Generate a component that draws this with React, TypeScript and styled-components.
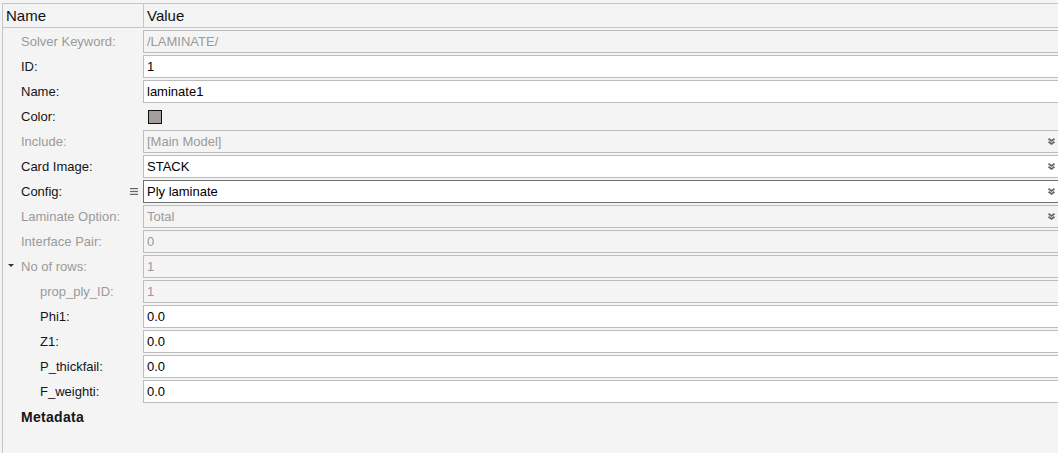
import React from "react";
import styled, { createGlobalStyle } from "styled-components";

const Global = createGlobalStyle`
  html, body { margin: 0; padding: 0; background: #f4f4f4; overflow: hidden; }
  body { font-family: "Liberation Sans", Arial, sans-serif; }
`;

const Panel = styled.div`
  margin: 3px 0 0 2px;
  width: 1060px;
  height: 450px;
  border-top: 1px solid #c6c6c6;
  border-left: 1px solid #c6c6c6;
  box-sizing: border-box;
  background: #f4f4f4;
`;

const Header = styled.div`
  display: grid;
  grid-template-columns: 141px 1fr;
  height: 24px;
  border-bottom: 1px solid #c6c6c6;
  box-sizing: border-box;
`;

const HeadCell = styled.div<{ $divider?: boolean }>`
  display: flex;
  align-items: center;
  padding-left: 3px;
  font-size: 15px;
  color: #111;
  border-right: ${(p) => (p.$divider ? "1px solid #c6c6c6" : "none")};
`;

const Body = styled.div`
  display: flex;
  flex-direction: column;
  gap: 2px;
  padding-top: 2px;
`;

const Row = styled.div`
  display: grid;
  grid-template-columns: 140px 1fr;
  height: 23px;
  align-items: center;
`;

const LabelCell = styled.div<{ $indent: number; $disabled?: boolean; $bold?: boolean }>`
  position: relative;
  display: flex;
  align-items: center;
  height: 100%;
  padding-left: ${(p) => 18 + p.$indent * 19}px;
  font-size: ${(p) => (p.$bold ? "14px" : "13px")};
  letter-spacing: ${(p) => (p.$bold ? "0.3px" : "0")};
  font-weight: ${(p) => (p.$bold ? 700 : 400)};
  color: ${(p) => (p.$disabled ? "#9a9a9a" : "#151515")};
  white-space: nowrap;
`;

const Toggle = styled.span`
  position: absolute;
  left: 5px;
  top: 9px;
  width: 0;
  height: 0;
  border-left: 3px solid transparent;
  border-right: 3px solid transparent;
  border-top: 3px solid #333;
`;

const MenuIcon = styled.svg`
  position: absolute;
  right: 5px;
  top: 8px;
`;

const Field = styled.div<{ $disabled?: boolean; $focused?: boolean }>`
  position: relative;
  height: 23px;
  box-sizing: border-box;
  border: 1px solid ${(p) => (p.$focused ? "#707070" : "#bcbcbc")};
  background: ${(p) => (p.$disabled ? "#f4f4f4" : "#ffffff")};
  color: ${(p) => (p.$disabled ? "#9a9a9a" : "#000")};
  font-size: 13px;
  display: flex;
  align-items: center;
  padding-left: 3px;
`;

const Chevron = styled.svg`
  position: absolute;
  right: 6px;
  top: 7px;
`;

const Swatch = styled.div`
  width: 12px;
  height: 12px;
  margin-left: 5px;
  border: 1px solid #111;
  background: #a39e9c;
`;

type RowDef = {
  label: string;
  value?: string;
  indent?: number;
  disabled?: boolean;
  labelDisabled?: boolean;
  select?: boolean;
  focused?: boolean;
  swatch?: boolean;
  toggle?: boolean;
  menu?: boolean;
  bold?: boolean;
  noField?: boolean;
};

const rows: RowDef[] = [
  { label: "Solver Keyword:", value: "/LAMINATE/", disabled: true, labelDisabled: true },
  { label: "ID:", value: "1" },
  { label: "Name:", value: "laminate1" },
  { label: "Color:", swatch: true },
  { label: "Include:", value: "[Main Model]", disabled: true, labelDisabled: true, select: true },
  { label: "Card Image:", value: "STACK", select: true },
  { label: "Config:", value: "Ply laminate", select: true, focused: true, menu: true },
  { label: "Laminate Option:", value: "Total", disabled: true, labelDisabled: true, select: true },
  { label: "Interface Pair:", value: "0", disabled: true, labelDisabled: true },
  { label: "No of rows:", value: "1", disabled: true, labelDisabled: true, toggle: true },
  { label: "prop_ply_ID:", value: "1", disabled: true, labelDisabled: true, indent: 1 },
  { label: "Phi1:", value: "0.0", indent: 1 },
  { label: "Z1:", value: "0.0", indent: 1 },
  { label: "P_thickfail:", value: "0.0", indent: 1 },
  { label: "F_weighti:", value: "0.0", indent: 1 },
  { label: "Metadata", bold: true, noField: true },
];

const ChevronIcon = () => (
  <Chevron width="7" height="7" viewBox="0 0 7 7">
    <path d="M0.5 0.8 L3.5 3 L6.5 0.8 M0.5 3.8 L3.5 6 L6.5 3.8" stroke="#666" strokeWidth="1.7" fill="none" />
  </Chevron>
);

const Menu = () => (
  <MenuIcon width="8" height="7" viewBox="0 0 8 7">
    <rect x="0" y="0" width="8" height="1.2" fill="#666" />
    <rect x="0" y="2.9" width="8" height="1.2" fill="#666" />
    <rect x="0" y="5.8" width="8" height="1.2" fill="#666" />
  </MenuIcon>
);

export default function App() {
  return (
    <>
      <Global />
      <Panel>
        <Header>
          <HeadCell $divider>Name</HeadCell>
          <HeadCell>Value</HeadCell>
        </Header>
        <Body>
          {rows.map((r) => (
            <Row key={r.label}>
              <LabelCell
                $indent={r.indent ?? 0}
                $disabled={r.labelDisabled}
                $bold={r.bold}
              >
                {r.toggle && <Toggle />}
                {r.label}
                {r.menu && <Menu />}
              </LabelCell>
              {r.noField ? (
                <div />
              ) : r.swatch ? (
                <Swatch />
              ) : (
                <Field $disabled={r.disabled} $focused={r.focused}>
                  {r.value}
                  {r.select && <ChevronIcon />}
                </Field>
              )}
            </Row>
          ))}
        </Body>
      </Panel>
    </>
  );
}
